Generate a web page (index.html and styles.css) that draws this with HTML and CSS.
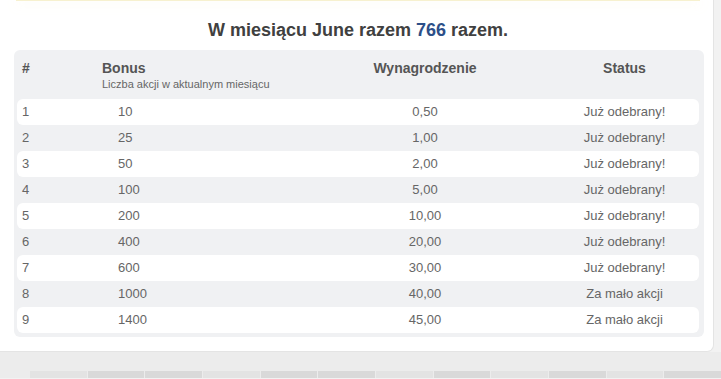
FILE: index.html
```html
<!DOCTYPE html>
<html lang="pl">
<head>
<meta charset="utf-8">
<title>Bonusy</title>
<link rel="stylesheet" href="styles.css">
</head>
<body>
<div class="page">
  <div class="card">
    <div class="notice"></div>
    <h2 class="title">W miesiącu June razem <span class="count">766</span> razem.</h2>
    <div class="table">
      <div class="row head">
        <div class="c1">#</div>
        <div class="c2"><div class="h">Bonus</div><div class="sub">Liczba akcji w aktualnym miesiącu</div></div>
        <div class="c3">Wynagrodzenie</div>
        <div class="c4">Status</div>
      </div>
      <div class="row odd"><div class="c1">1</div><div class="c2 v">10</div><div class="c3">0,50</div><div class="c4">Już odebrany!</div></div>
      <div class="row"><div class="c1">2</div><div class="c2 v">25</div><div class="c3">1,00</div><div class="c4">Już odebrany!</div></div>
      <div class="row odd"><div class="c1">3</div><div class="c2 v">50</div><div class="c3">2,00</div><div class="c4">Już odebrany!</div></div>
      <div class="row"><div class="c1">4</div><div class="c2 v">100</div><div class="c3">5,00</div><div class="c4">Już odebrany!</div></div>
      <div class="row odd"><div class="c1">5</div><div class="c2 v">200</div><div class="c3">10,00</div><div class="c4">Już odebrany!</div></div>
      <div class="row"><div class="c1">6</div><div class="c2 v">400</div><div class="c3">20,00</div><div class="c4">Już odebrany!</div></div>
      <div class="row odd"><div class="c1">7</div><div class="c2 v">600</div><div class="c3">30,00</div><div class="c4">Już odebrany!</div></div>
      <div class="row"><div class="c1">8</div><div class="c2 v">1000</div><div class="c3">40,00</div><div class="c4">Za mało akcji</div></div>
      <div class="row odd"><div class="c1">9</div><div class="c2 v">1400</div><div class="c3">45,00</div><div class="c4">Za mało akcji</div></div>
    </div>
  </div>
  <div class="footer">
    <div class="blocks">
      <span class="b l"></span><span class="b"></span><span class="b"></span><span class="b l"></span><span class="b"></span><span class="b"></span><span class="b l"></span><span class="b"></span><span class="b l"></span><span class="b"></span><span class="b l"></span><span class="b"></span>
    </div>
  </div>
</div>
</body>
</html>
```
FILE: styles.css
```css
html, body {
  margin: 0;
  padding: 0;
}
body {
  background: #f2f2f2;
  font-family: "Liberation Sans", Arial, sans-serif;
  width: 721px;
  height: 379px;
  overflow: hidden;
}
.page {
  display: flex;
  flex-direction: column;
}
.card {
  width: 690px;
  background: #ffffff;
  padding: 0 9px 14px 14px;
  border-right: 1px solid #e4e4e4;
  border-bottom: 1px solid #e4e4e4;
  border-radius: 0 0 7px 0;
  display: flex;
  flex-direction: column;
}
.notice {
  height: 1px;
  margin: 0 4px 0 2px;
  background: #f7f1cf;
  box-shadow: 0 3px 10px rgba(250, 240, 200, 0.6);
}
.title {
  margin: 18px 0 9px 0;
  height: 22px;
  line-height: 22px;
  font-size: 18px;
  font-weight: bold;
  color: #404040;
  text-align: center;
  padding-right: 2px;
}
.count {
  color: #2c4f88;
}
.table {
  background: #f0f1f3;
  border-radius: 6px;
  padding: 0 5px 4px 3px;
  display: flex;
  flex-direction: column;
}
.row {
  display: grid;
  grid-template-columns: 80px 203px 250px 149px;
  height: 26px;
  line-height: 26px;
  font-size: 13px;
  color: #666666;
  border-radius: 6px;
}
.row.odd {
  background: #ffffff;
}
.row .c1 {
  padding-left: 5px;
}
.row .c2.v {
  padding-left: 21px;
}
.row .c3, .row .c4 {
  text-align: center;
}
.row.head {
  height: 49px;
  padding-top: 10px;
  box-sizing: border-box;
  line-height: 16px;
  font-size: 14px;
  font-weight: bold;
  color: #555555;
}
.row.head .c2 {
  padding-left: 5px;
}
.sub {
  margin-top: 1px;
  font-size: 11px;
  line-height: 14px;
  font-weight: normal;
  color: #666666;
}
.footer {
  height: 26px;
  background: #ececec;
  display: flex;
  flex-direction: column;
  justify-content: flex-end;
}
.blocks {
  display: flex;
  gap: 1px;
  height: 7px;
  padding-left: 30px;
}
.b {
  width: 58px;
  background: #d9d9d9;
}
.b.l {
  background: #e3e3e3;
}
```
